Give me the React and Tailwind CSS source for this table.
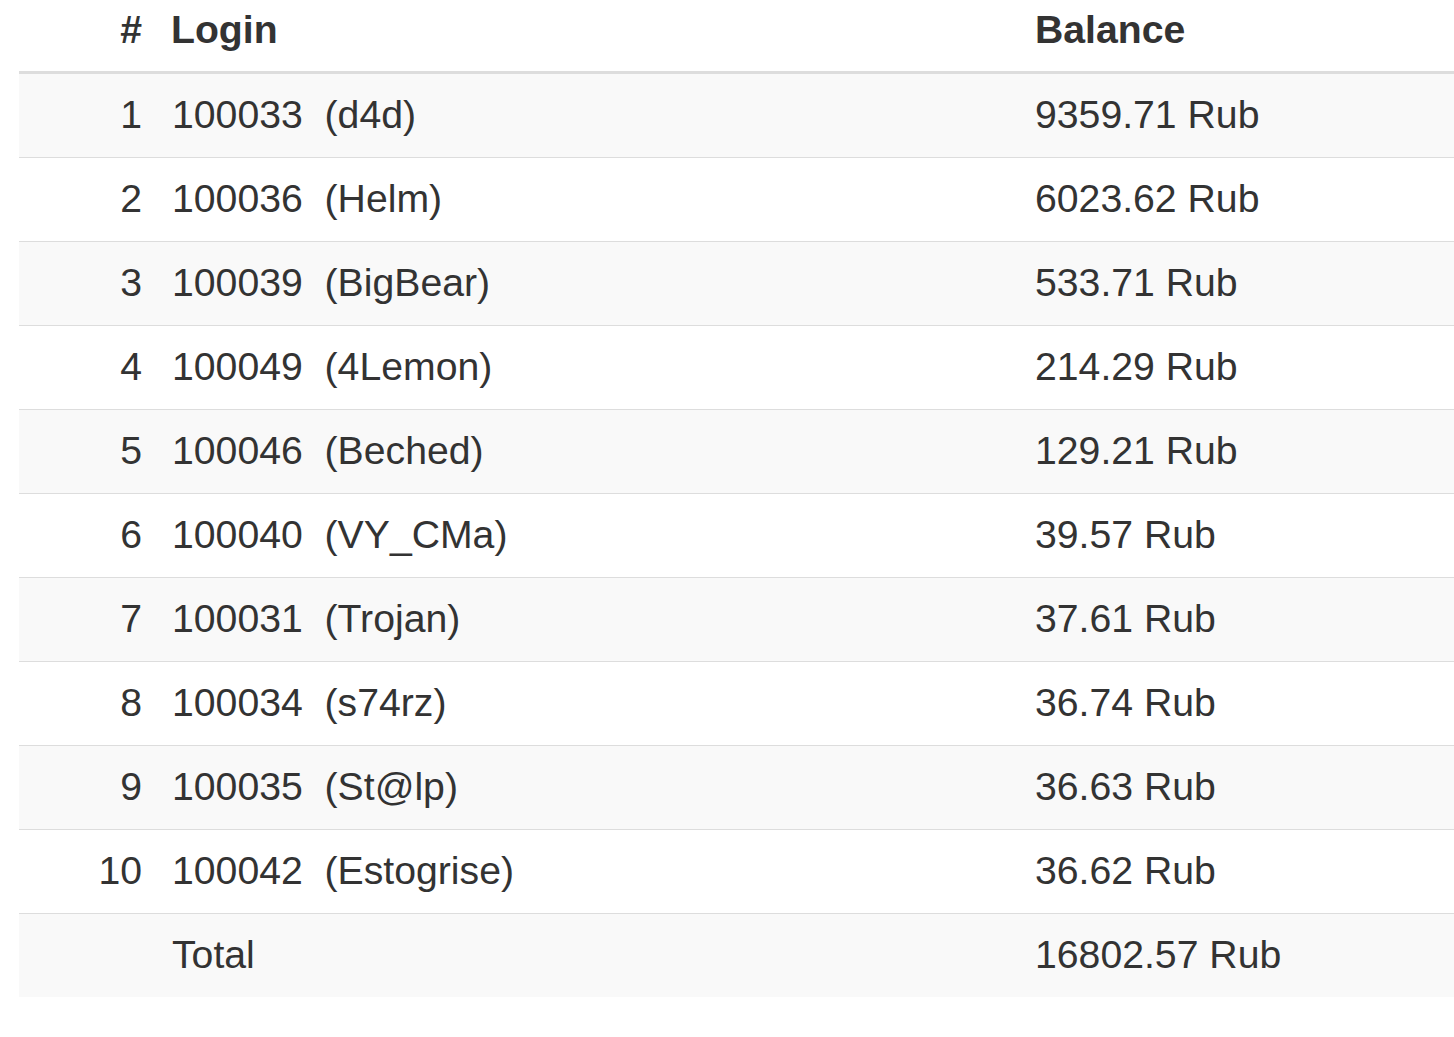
import React from 'react'

function App() {

  const rows=[
    {n:1, id:"100033", name:"d4d", balance:"9359.71 Rub"},
    {n:2, id:"100036", name:"Helm", balance:"6023.62 Rub"},
    {n:3, id:"100039", name:"BigBear", balance:"533.71 Rub"},
    {n:4, id:"100049", name:"4Lemon", balance:"214.29 Rub"},
    {n:5, id:"100046", name:"Beched", balance:"129.21 Rub"},
    {n:6, id:"100040", name:"VY_CMa", balance:"39.57 Rub"},
    {n:7, id:"100031", name:"Trojan", balance:"37.61 Rub"},
    {n:8, id:"100034", name:"s74rz", balance:"36.74 Rub"},
    {n:9, id:"100035", name:"St@lp", balance:"36.63 Rub"},
    {n:10, id:"100042", name:"Estogrise", balance:"36.62 Rub"},
  ]

  return (
    <div className="min-h-screen bg-white pl-[19px] overflow-hidden font-['Liberation_Sans',Arial,sans-serif] text-[#333] text-[39.2px] leading-[56px]">
      <table className="table-fixed w-[1435px]">
        <thead>
          <tr className="border-b-[3px] border-[#ddd]">
            <th className="w-[137px] text-right font-bold pt-[2px] pb-[13px] px-[14px]">#</th>
            <th className="w-[865px] text-left font-bold pt-[2px] pb-[13px] pl-[15px] pr-[14px]">Login</th>
            <th className="text-left font-bold pt-[2px] pb-[13px] px-[14px]">Balance</th>
          </tr>
        </thead>
        <tbody>
          {
            rows.map((r,i)=>{
              return(
                <tr key={r.n} className={`${i>0 ? "border-t border-[#ddd]" : ""} ${i%2===0 ? "bg-[#f9f9f9]" : "bg-white"}`}>
                  <td className="text-right pt-[13px] pb-[14px] px-[14px]">{r.n}</td>
                  <td className="text-left pt-[13px] pb-[14px] pl-[16px] pr-[14px] whitespace-nowrap">{r.id}{"\u00a0\u00a0"}({r.name})</td>
                  <td className="text-left pt-[13px] pb-[14px] px-[14px] whitespace-nowrap">{r.balance}</td>
                </tr>
              )
            })
          }
          <tr className="border-t border-[#ddd] bg-[#f9f9f9]">
            <td className="pt-[13px] pb-[14px] px-[14px]"></td>
            <td className="text-left pt-[13px] pb-[14px] pl-[16px] pr-[14px]">Total</td>
            <td className="text-left pt-[13px] pb-[14px] px-[14px] whitespace-nowrap">16802.57 Rub</td>
          </tr>
        </tbody>
      </table>
    </div>
  )
}

export default App
